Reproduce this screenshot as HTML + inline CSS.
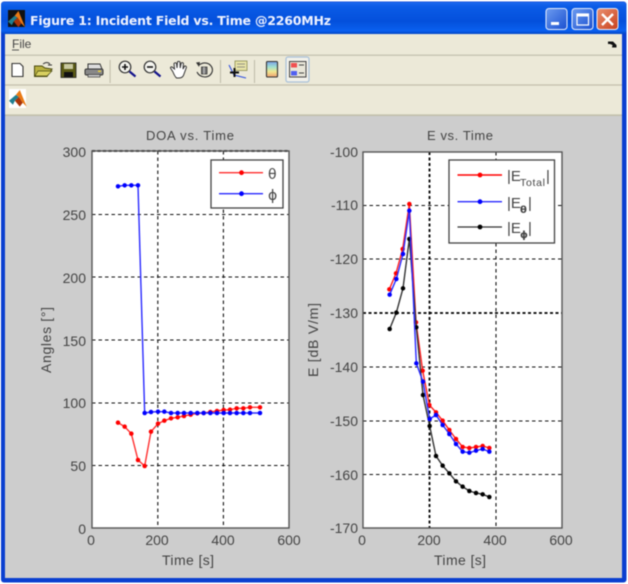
<!DOCTYPE html>
<html><head><meta charset="utf-8"><title>Figure 1</title>
<style>
html,body{margin:0;padding:0;background:#fff;width:628px;height:584px;overflow:hidden}
svg{display:block;filter:blur(.65px)}
text{font-family:"Liberation Sans",sans-serif;fill:#444}
.t{font-size:14px}
.g{stroke:#111;stroke-width:1.1;stroke-dasharray:3.5 3;fill:none}
.g2{stroke:#000;stroke-width:1.8;stroke-dasharray:3 2.5;fill:none}
.ax{stroke:#555;stroke-width:1.4;fill:none}
</style></head><body>
<svg width="628" height="584" viewBox="0 0 628 584" xmlns="http://www.w3.org/2000/svg">
<defs>
<linearGradient id="tb" x1="0" y1="0" x2="0" y2="1"><stop offset="0" stop-color="#1c68ee"/><stop offset=".15" stop-color="#0a5be6"/><stop offset=".6" stop-color="#0450dc"/><stop offset=".9" stop-color="#0a60f0"/><stop offset="1" stop-color="#0244c4"/></linearGradient>
<linearGradient id="bb" x1="0" y1="0" x2="1" y2="1"><stop offset="0" stop-color="#6d9cf0"/><stop offset="1" stop-color="#1a4fd0"/></linearGradient>
<linearGradient id="rb" x1="0" y1="0" x2="1" y2="1"><stop offset="0" stop-color="#ea9070"/><stop offset="1" stop-color="#c8401c"/></linearGradient>
<linearGradient id="cb" x1="0" y1="0" x2="0" y2="1"><stop offset="0" stop-color="#7aa0e8"/><stop offset=".35" stop-color="#a0e0d0"/><stop offset=".65" stop-color="#f0e890"/><stop offset="1" stop-color="#f0a070"/></linearGradient>
<marker id="mr" viewBox="-3 -3 6 6" markerWidth="15" markerHeight="15" markerUnits="userSpaceOnUse"><circle r="2.7" fill="#f00"/></marker>
<marker id="mb" viewBox="-3 -3 6 6" markerWidth="15" markerHeight="15" markerUnits="userSpaceOnUse"><circle r="2.7" fill="#00f"/></marker>
<marker id="mk" viewBox="-3 -3 6 6" markerWidth="15" markerHeight="15" markerUnits="userSpaceOnUse"><circle r="2.7" fill="#000"/></marker>
<g id="ml">
<path d="M0 11 L7 5 L10 7 L6 11 L4 15Z" fill="#1f7f90"/>
<path d="M7 5 L11 0 L18 17 L14 13 L10 7Z" fill="#ea7a14"/>
<path d="M10 7 L14 13 L11 17 L6 11Z" fill="#a83408"/>
</g>
</defs>

<!-- window frame -->
<rect x="1" y="1.5" width="625.5" height="581" rx="3" fill="#0a3fd0"/>
<rect x="1" y="2" width="625.5" height="32" rx="3" fill="url(#tb)"/>
<rect x="5" y="34" width="617" height="82" fill="#ece9d8"/>
<rect x="5" y="116" width="617" height="462" fill="#cdcdcd"/>
<rect x="5" y="54.6" width="617" height="1.2" fill="#c2bfac"/>
<rect x="5" y="84.4" width="617" height="1.2" fill="#c2bfac"/>
<rect x="5" y="114.4" width="617" height="1.6" fill="#c2bfac"/>

<!-- title -->
<rect x="8" y="10" width="17" height="17" fill="#111"/>
<use href="#ml" transform="translate(8,11) scale(.95)"/>
<text x="30" y="25" style="font-family:'DejaVu Sans',sans-serif;font-weight:bold;font-size:12.5px;fill:#eef2ff" textLength="301" lengthAdjust="spacing">Figure 1: Incident Field vs. Time @2260MHz</text>

<!-- window buttons -->
<rect x="546" y="8.5" width="21" height="21" rx="3" fill="url(#bb)" stroke="#e8eefc" stroke-width="1"/>
<rect x="551" y="22" width="8" height="3" fill="#fff"/>
<rect x="572" y="8.5" width="21" height="21" rx="3" fill="url(#bb)" stroke="#e8eefc" stroke-width="1"/>
<rect x="577" y="14" width="11.5" height="11" fill="none" stroke="#fff" stroke-width="1.2"/><rect x="577" y="14" width="11.5" height="2.5" fill="#fff"/>
<rect x="597" y="8.5" width="21" height="21" rx="3" fill="url(#rb)" stroke="#e8eefc" stroke-width="1"/>
<path d="M602 14 L613 25 M613 14 L602 25" stroke="#fff" stroke-width="2.4"/>

<!-- menu -->
<text x="12" y="48" style="font-size:12px;fill:#444">File</text>
<rect x="12" y="49.5" width="7" height="1" fill="#555"/>
<path d="M608 41.5 H613 L616.5 45 V47.5 H612 L612.5 45 L610 44 H608Z" fill="#111"/>

<!-- toolbar -->
<rect x="109.6" y="60" width="1" height="23" fill="#bdbaa8"/>
<rect x="220" y="60" width="1" height="23" fill="#bdbaa8"/>
<rect x="254" y="60" width="1" height="23" fill="#bdbaa8"/>
<!-- new -->
<path d="M12 63.5 H20 L23 66.5 V76.5 H12Z" fill="#fff" stroke="#333" stroke-width="1.1"/>
<!-- open -->
<path d="M34.5 76.5 V66 H42 L45 68 L52 69 L47 76.5Z" fill="#b8b040" stroke="#4a4a10" stroke-width="1"/>
<path d="M35 76 L38 71 H52 L47 76Z" fill="#d8d060" stroke="#4a4a10" stroke-width=".7"/>
<path d="M43 64 Q47 61 50 64 M48 65 H52" stroke="#333" stroke-width="1" fill="none"/>
<!-- save -->
<rect x="61" y="63" width="15" height="14.5" fill="#5a5a14" stroke="#222" stroke-width=".8"/>
<rect x="64" y="64" width="9" height="5" fill="#c8c8a0"/>
<rect x="64" y="72" width="9" height="5" fill="#111"/>
<!-- print -->
<path d="M88 64 H100 L102 69 H88Z" fill="#ddd" stroke="#333"/>
<rect x="85" y="69" width="18" height="6" rx="1.5" fill="#888" stroke="#333"/>
<rect x="88" y="74.5" width="12" height="2.5" fill="#ccc" stroke="#444" stroke-width=".8"/>
<rect x="98" y="70.5" width="3" height="1.5" fill="#e8d040"/>
<!-- zoom in -->
<circle cx="125" cy="67" r="5.8" fill="#f6f6f0" stroke="#333" stroke-width="1.2"/>
<path d="M122 67 H128 M125 64 V70" stroke="#111" stroke-width="1.6"/>
<path d="M129.5 71.5 L135.5 76.5" stroke="#14148c" stroke-width="2.2"/>
<!-- zoom out -->
<circle cx="150" cy="67" r="5.8" fill="#f6f6f0" stroke="#333" stroke-width="1.2"/>
<path d="M147 67 H153" stroke="#111" stroke-width="1.6"/>
<path d="M154.5 71.5 L160.5 76.5" stroke="#14148c" stroke-width="2.2"/>
<!-- hand -->
<path d="M173 72 L170.5 68 Q170.5 66.5 172 67 L174.5 69 L174 63.5 Q175.5 62 176.5 63.5 L177 68 L177.5 61.8 Q179 60.8 180 62 L180.2 68 L181.2 63 Q182.6 62 183.4 63.4 L183 69 L184.6 66 Q186.4 65.8 186.4 67.4 L184 74 Q183 78 179 78 H176.5 Q174.5 76 173 72Z" fill="#fff" stroke="#333" stroke-width="1"/>
<!-- rotate -->
<path d="M199 65 Q204 61.5 209 64 Q213 67 212.4 71 Q211 76.6 205 77 Q199 76.6 197 72" fill="none" stroke="#333" stroke-width="1.1"/>
<path d="M196 62.5 L200 62 L199 67Z" fill="#333"/>
<path d="M201.5 67 H207 V74 H201.5Z" fill="#777" stroke="#333" stroke-width=".8"/>
<path d="M204 67 V74" stroke="#ddd" stroke-width=".8"/>
<!-- data cursor -->
<rect x="235" y="61" width="12" height="9.5" fill="#e8e4a8" stroke="#8a8a50" stroke-width=".8"/>
<path d="M237 64 H245 M237 67 H245" stroke="#777" stroke-width=".8"/>
<path d="M229 65 L234 75 L246 78" fill="none" stroke="#3050e0" stroke-width="1.1"/>
<path d="M230 72.5 H239 M234.5 68 V77" stroke="#111" stroke-width="2"/>
<!-- colorbar -->
<rect x="266.5" y="61.5" width="11" height="15.5" rx="1" fill="url(#cb)" stroke="#333" stroke-width="1.1"/>
<!-- legend toggled -->
<rect x="286" y="57" width="23" height="25" rx="2" fill="#f2f1ea" stroke="#a8c0d8" stroke-width="1.2"/>
<rect x="289.5" y="61.5" width="16.5" height="15.5" fill="#e8e6d8" stroke="#444" stroke-width="1"/>
<rect x="291" y="63" width="6" height="4.5" fill="#f05050"/>
<rect x="291" y="71" width="6" height="4.5" fill="#5060f0"/>
<path d="M299 65 H304 M299 73 H304" stroke="#444" stroke-width="1"/>
<!-- matlab icon -->
<rect x="9" y="89" width="17" height="19" fill="#fff"/>
<use href="#ml" transform="translate(9,90) scale(.98)"/>

<!-- LEFT AXES -->
<rect x="92" y="151" width="197" height="377" fill="#fff"/>
<g class="g">
<path d="M92 214.5 H289 M92 277 H289 M92 340 H289 M92 403 H289 M92 465.5 H289"/>
<path d="M157.8 151 V528 M223.4 151 V528"/>
</g>
<path class="g2" d="M92 151 H289"/>
<rect class="ax" x="92" y="151" width="197" height="377"/>
<g transform="translate(30,125) scale(.33333)" fill="none" stroke-width="4.2">
<polyline stroke="#ff3030" marker-start="url(#mr)" marker-mid="url(#mr)" marker-end="url(#mr)" points="264,893 284,905 304,926 324,1005 344,1023 363,920 384,896 403,887 423,880 443,877 462,873 482,869 502,865 521,864 541,861 561,858 581,855 600,854 620,850 640,850 660,847 690,847"/>
<polyline stroke="#2a2aff" marker-start="url(#mb)" marker-mid="url(#mb)" points="264,184 284,181 304,181 324,181 344,864"/>
<polyline stroke="#2a2aff" marker-start="url(#mb)" marker-mid="url(#mb)" marker-end="url(#mb)" points="344,864 363,861 384,860 403,860 423,864 443,864 462,864 482,864 502,864 521,864 541,864 561,864 581,864 600,864 620,864 640,864 660,864 690,864"/>
</g>
<!-- left legend -->
<rect x="211" y="160" width="72" height="48" fill="#fff" stroke="#444" stroke-width="1.3"/>
<path d="M219 172.7 H263" stroke="#ff3030" stroke-width="1.3"/><circle cx="241.5" cy="172.7" r="2.4" fill="#f00"/>
<path d="M219 193.7 H263" stroke="#2a2aff" stroke-width="1.3"/><circle cx="241.5" cy="193.7" r="2.4" fill="#00f"/>
<text x="268" y="179" style="font-family:'DejaVu Sans',sans-serif;font-size:14px">θ</text>
<text x="268" y="200" style="font-family:'DejaVu Sans',sans-serif;font-size:14px">ϕ</text>
<!-- left labels -->
<text x="190" y="140" text-anchor="middle" style="font-size:13px" textLength="88" lengthAdjust="spacing">DOA vs. Time</text>
<g class="t" text-anchor="end">
<text x="86" y="157">300</text><text x="86" y="220">250</text><text x="86" y="283">200</text><text x="86" y="346">150</text><text x="86" y="408">100</text><text x="86" y="471">50</text><text x="86" y="534">0</text>
</g>
<g class="t" text-anchor="middle">
<text x="91" y="545">0</text><text x="157" y="545">200</text><text x="223" y="545">400</text><text x="289" y="545">600</text>
</g>
<text x="188" y="565" text-anchor="middle" class="t" textLength="52" lengthAdjust="spacing">Time [s]</text>
<text transform="translate(51,340) rotate(-90)" text-anchor="middle" class="t" textLength="66" lengthAdjust="spacing">Angles [°]</text>

<!-- RIGHT AXES -->
<rect x="363" y="152" width="199" height="376" fill="#fff"/>
<g class="g">
<path d="M363 205.5 H562 M363 259 H562 M363 367 H562 M363 421 H562 M363 474.5 H562"/>
<path d="M496 152 V528"/>
</g>
<path class="g2" d="M363 313 H562 M429.5 152 V528"/>
<rect class="ax" x="363" y="152" width="199" height="376"/>
<g transform="translate(300,125) scale(.33333)" fill="none" stroke-width="4.2">
<polyline stroke="#ff2020" marker-start="url(#mr)" marker-mid="url(#mr)" marker-end="url(#mr)" points="268,493 288,445 308,372 328,237 348,592 368,737 388,840 408,862 428,887 448,915 468,942 488,966 508,969 528,966 548,963 568,969"/>
<polyline stroke="#333" marker-start="url(#mk)" marker-mid="url(#mk)" marker-end="url(#mk)" points="269,612 289,563 309,490 328,342 349,607 369,810 389,903 408,993 428,1022 448,1045 468,1069 488,1085 508,1098 528,1104 548,1108 568,1116"/>
<polyline stroke="#2a2aff" marker-start="url(#mb)" marker-mid="url(#mb)" marker-end="url(#mb)" points="269,509 289,462 309,387 328,257 349,715 369,770 389,882 408,870 428,900 448,927 468,957 488,980 508,983 528,977 548,972 568,980"/>
</g>
<!-- right legend -->
<rect x="449" y="160" width="105.5" height="83" fill="#fff" stroke="#444" stroke-width="1.3"/>
<path d="M457.5 175 H502" stroke="#f00" stroke-width="1.5"/><circle cx="480" cy="175" r="2.4" fill="#f00"/>
<path d="M457.5 201.7 H502" stroke="#2a2aff" stroke-width="1.3"/><circle cx="480" cy="201.7" r="2.4" fill="#00f"/>
<path d="M457.5 227 H502" stroke="#333" stroke-width="1.3"/><circle cx="480" cy="227" r="2.4" fill="#000"/>
<text x="507" y="181" style="font-size:15px">|E</text><text x="520" y="186" style="font-size:10.5px" textLength="25">Total</text><text x="546" y="181" style="font-size:15px">|</text>
<text x="507" y="208" style="font-size:15px">|E</text><text x="520" y="213" style="font-family:'DejaVu Sans',sans-serif;font-size:10px;font-weight:bold">θ</text><text x="528" y="208" style="font-size:15px">|</text>
<text x="507" y="233" style="font-size:15px">|E</text><text x="520" y="238" style="font-family:'DejaVu Sans',sans-serif;font-size:10px;font-weight:bold">ϕ</text><text x="528" y="233" style="font-size:15px">|</text>
<!-- right labels -->
<text x="460" y="140" text-anchor="middle" style="font-size:13px" textLength="66" lengthAdjust="spacing">E vs. Time</text>
<g class="t" text-anchor="end">
<text x="358" y="157">-100</text><text x="358" y="210">-110</text><text x="358" y="264">-120</text><text x="358" y="318">-130</text><text x="358" y="372">-140</text><text x="358" y="426">-150</text><text x="358" y="480">-160</text><text x="358" y="533">-170</text>
</g>
<g class="t" text-anchor="middle">
<text x="362" y="545">0</text><text x="429" y="545">200</text><text x="495" y="545">400</text><text x="561" y="545">600</text>
</g>
<text x="460" y="565" text-anchor="middle" class="t" textLength="52" lengthAdjust="spacing">Time [s]</text>
<text transform="translate(318,340) rotate(-90)" text-anchor="middle" class="t" textLength="74" lengthAdjust="spacing">E [dB V/m]</text>
</svg>
</body></html>
